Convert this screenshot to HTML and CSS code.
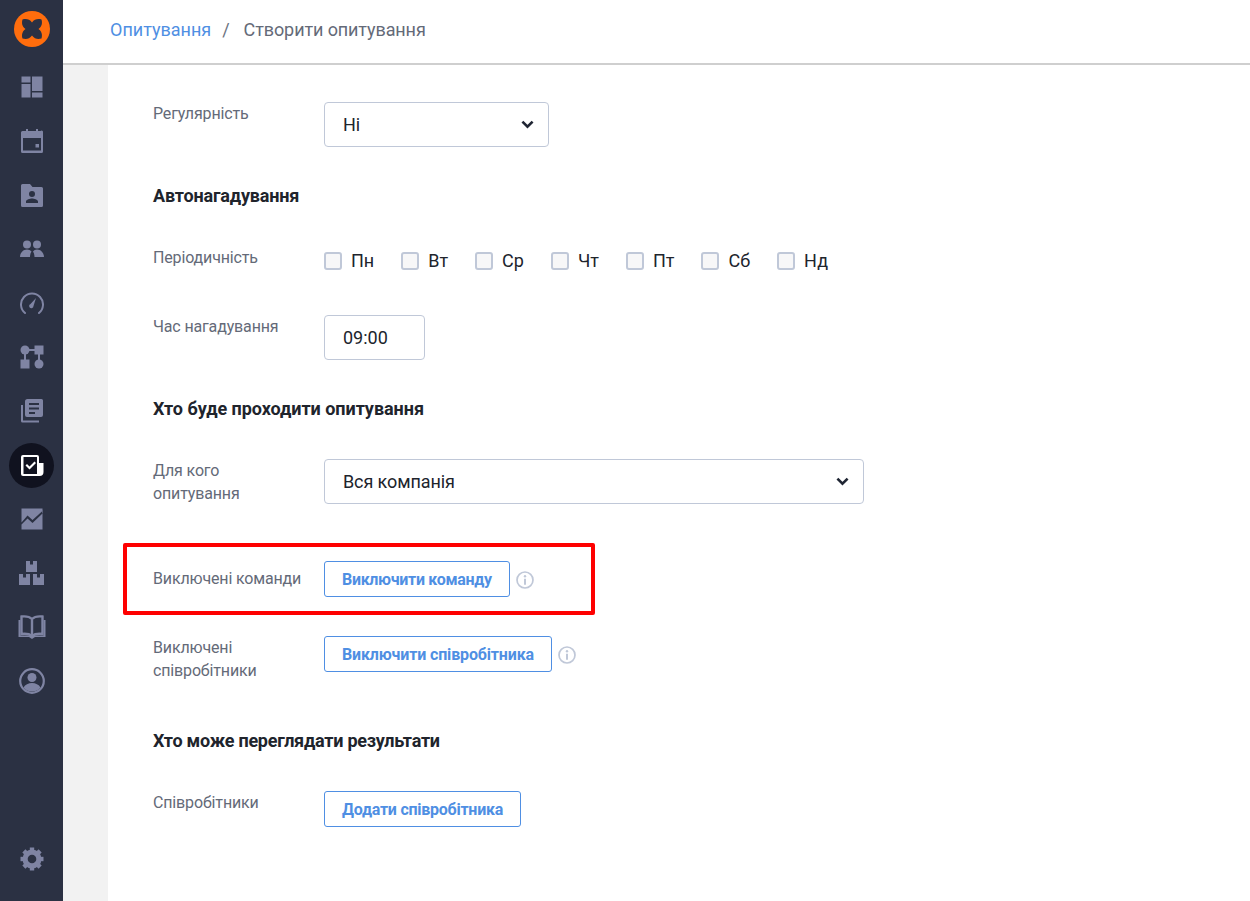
FILE: index.html
```html
<!DOCTYPE html>
<html lang="uk">
<head>
<meta charset="utf-8">
<title>Створити опитування</title>
<link rel="stylesheet" href="styles.css">
</head>
<body>
<div class="app">
  <aside class="sidebar">
    <div class="logo">
      <svg viewBox="0 0 36 36" width="36" height="36"><circle cx="18" cy="18" r="18" fill="#ff6d0d"/><path d="M8.500 8.500C12 7.500 15.500 8 18 11.500C20.500 8 24 7.500 27.500 8.500C28.500 12 28 15.500 24.500 18C28 20.500 28.500 24 27.500 27.500C24 28.500 20.500 28 18 24.500C15.500 28 12 28.500 8.500 27.500C7.500 24 8 20.500 11.500 18C8 15.500 7.500 12 8.500 8.500Z" fill="#2b3143"/></svg>
    </div>
    <nav class="nav">
      <a class="nav-item"><svg viewBox="0 0 24 24" class="ico"><path d="M1.500 1.500h9v6h-9zM1.500 9h9v13.500h-9zM12 1.500h10.500V16H12zM12 17.500h10.500v5H12z"/></svg></a>
      <a class="nav-item"><svg viewBox="0 0 24 24" class="ico"><path d="M6 0h2v2h8V0h2v2h2.500A1.500 1.500 0 0 1 23 3.500v19a1.500 1.500 0 0 1-1.500 1.500h-19A1.500 1.500 0 0 1 1 22.500v-19A1.500 1.500 0 0 1 2.500 2H6zM3 9v12.500h18V9zM15.500 15h3.500v3.500h-3.500z" fill-rule="evenodd"/></svg></a>
      <a class="nav-item"><svg viewBox="0 0 24 24" class="ico"><path d="M2.500 1H10l2.500 3h9A1.500 1.500 0 0 1 23 5.500v17a1.500 1.500 0 0 1-1.500 1.500h-19A1.500 1.500 0 0 1 1 22.500v-20A1.500 1.500 0 0 1 2.500 1zM12 8a3 3 0 1 0 0 6 3 3 0 0 0 0-6zM6 20h12v-1.500c0-2-4-3-6-3s-6 1-6 3z" fill-rule="evenodd"/></svg></a>
      <a class="nav-item"><svg viewBox="0 0 24 24" class="ico"><circle cx="7" cy="7.500" r="4"/><circle cx="17" cy="7.500" r="4"/><path d="M0 20c0-4 3-7.500 7-7.500 1.800 0 3.500.8 4.500 2-1 1.500-1.500 3.500-1.500 5.500zM24 20c0-4-3-7.500-7-7.500-1.800 0-3 .8-4 2 1 1.500 1.500 3.500 1.500 5.500z"/></svg></a>
      <a class="nav-item"><svg viewBox="0 0 24 24" class="ico"><path d="M5 22A11 11 0 1 1 19 22" fill="none" stroke="#7f84a3" stroke-width="2" stroke-linecap="round"/><path d="M16 7l-2.500 8a2.200 2.200 0 1 1-3-2z"/></svg></a>
      <a class="nav-item"><svg viewBox="0 0 24 24" class="ico"><circle cx="5" cy="5" r="4.500"/><path d="M14.500.5h9v9h-9zM.5 14.500h9v9h-9z"/><circle cx="19" cy="19" r="4.500"/><path d="M8 4h8v2H8zM4 8h2v8H4zM18 8h2v8h-2z"/></svg></a>
      <a class="nav-item"><svg viewBox="0 0 24 24" class="ico"><path d="M7.500 0h14A1.500 1.500 0 0 1 23 1.500V16a2 2 0 0 1-2 2H7a2 2 0 0 1-2-2V2.500A2.500 2.500 0 0 1 7.500 0zM9 4v2h10V4zm0 4.500v2h10v-2zM9 13v2h6v-2z" fill-rule="evenodd"/><path d="M1 6h2v15.500h16v2H2.500A1.500 1.500 0 0 1 1 22z"/></svg></a>
      <a class="nav-item active"><svg viewBox="0 0 24 24" class="ico ico-active"><path d="M3 2h14a2 2 0 0 1 2 2v6h4.500v9a4 4 0 0 1-4 4H3a2 2 0 0 1-2-2V4a2 2 0 0 1 2-2zM3.500 4v17H17V4z" fill-rule="evenodd"/><path d="M5.500 12.500l1.500-1.500 2.500 2.500 5-5 1.500 1.500-6.500 6.500z"/></svg></a>
      <a class="nav-item"><svg viewBox="0 0 24 24" class="ico"><path d="M1.500 1.500h21v21H1.500zM1.500 15.500v2l6-6 5 4.500 10.500-10v-2.500L12.500 13 7.500 8.500z" fill-rule="evenodd"/></svg></a>
      <a class="nav-item"><svg viewBox="0 0 25 24" class="ico ico-boxes"><path d="M7 0h4v3.500h3V0h4v11H7zM0 13h4v3.500h3V13h4v11H0zM14 13h4v3.500h3V13h4v11H14z"/></svg></a>
      <a class="nav-item"><svg viewBox="0 0 28 24" class="ico ico-wide"><path d="M14 4v16M14 4c-2-2-6-3-10.500-2.500V19c4-.5 8 0 10.500 2 2.500-2 6.500-2.500 10.500-2V1.500C20 1 16 2 14 4z" fill="none" stroke="#7f84a3" stroke-width="2.400"/><path d="M.5 5h2v15.500h23V5h2v17H17l-3 2-3-2H.5z"/></svg></a>
      <a class="nav-item"><svg viewBox="0 0 26 26" class="ico ico-user"><circle cx="13" cy="13" r="11.800" fill="none" stroke="#7f84a3" stroke-width="2.200"/><circle cx="13" cy="9.500" r="4.500"/><path d="M4.500 19.500c1.500-3 5-4.500 8.500-4.500s7 1.500 8.500 4.500c-2 2.500-5 4-8.500 4s-6.500-1.500-8.500-4z"/></svg></a>
    </nav>
    <a class="nav-item gear"><svg viewBox="0 0 24 24" class="ico"><circle cx="12" cy="12" r="9.500"/><g><rect x="9.800" y="0.500" width="4.400" height="23"/><rect x="9.800" y="0.500" width="4.400" height="23" transform="rotate(45 12 12)"/><rect x="9.800" y="0.500" width="4.400" height="23" transform="rotate(90 12 12)"/><rect x="9.800" y="0.500" width="4.400" height="23" transform="rotate(135 12 12)"/></g><circle cx="12" cy="12" r="4.300" fill="#2b3143"/></svg></a>
  </aside>
  <div class="page">
    <header class="topbar">
      <a class="crumb-link">Опитування</a>
      <span class="crumb-sep">/</span>
      <span class="crumb">Створити опитування</span>
    </header>
    <div class="body">
      <div class="strip"></div>
      <main class="form">
        <div class="row row-regular">
          <label class="label">Регулярність</label>
          <div class="select select-small"><span>Ні</span><svg class="chev" viewBox="0 0 12 8"><path d="M1.300 1.300L6 6l4.700-4.700" fill="none" stroke="#1f2533" stroke-width="2.400"/></svg></div>
        </div>
        <h2 class="heading h-auto">Автонагадування</h2>
        <div class="row row-days">
          <label class="label">Періодичність</label>
          <div class="days">
            <span class="day"><i class="box"></i>Пн</span>
            <span class="day"><i class="box"></i>Вт</span>
            <span class="day"><i class="box"></i>Ср</span>
            <span class="day"><i class="box"></i>Чт</span>
            <span class="day"><i class="box"></i>Пт</span>
            <span class="day"><i class="box"></i>Сб</span>
            <span class="day"><i class="box"></i>Нд</span>
          </div>
        </div>
        <div class="row row-time">
          <label class="label">Час нагадування</label>
          <div class="input-time">09:00</div>
        </div>
        <h2 class="heading h-who">Хто буде проходити опитування</h2>
        <div class="row row-for">
          <label class="label label-narrow">Для кого опитування</label>
          <div class="select select-wide"><span>Вся компанія</span><svg class="chev" viewBox="0 0 12 8"><path d="M1.300 1.300L6 6l4.700-4.700" fill="none" stroke="#1f2533" stroke-width="2.400"/></svg></div>
        </div>
        <div class="row row-teams">
          <label class="label">Виключені команди</label>
          <button class="btn btn-team">Виключити команду</button>
          <svg class="info" viewBox="0 0 18 18"><circle cx="9" cy="9" r="8" fill="none" stroke="#c0c8d8" stroke-width="1.700"/><circle cx="9" cy="5.300" r="1.200" fill="#c0c8d8"/><path d="M8 7.800h2v6H8z" fill="#c0c8d8"/></svg>
        </div>
        <div class="row row-emp">
          <label class="label label-narrow">Виключені співробітники</label>
          <button class="btn btn-emp">Виключити співробітника</button>
          <svg class="info" viewBox="0 0 18 18"><circle cx="9" cy="9" r="8" fill="none" stroke="#c0c8d8" stroke-width="1.700"/><circle cx="9" cy="5.300" r="1.200" fill="#c0c8d8"/><path d="M8 7.800h2v6H8z" fill="#c0c8d8"/></svg>
        </div>
        <h2 class="heading h-view">Хто може переглядати результати</h2>
        <div class="row row-add">
          <label class="label">Співробітники</label>
          <button class="btn btn-add">Додати співробітника</button>
        </div>
        <div class="highlight"></div>
      </main>
    </div>
  </div>
</div>
</body>
</html>
```
FILE: styles.css
```css
* { box-sizing: border-box; }
html, body { margin: 0; padding: 0; height: 901px; overflow: hidden; background: #fff; }
body { font-family: "Roboto", "Noto Sans", sans-serif; color: #20242c; }
.app { display: flex; height: 901px; }

.sidebar { width: 63px; flex: none; background: #2b3143; display: flex; flex-direction: column; align-items: center; padding: 11px 0 15px; }
.logo { height: 36px; margin-bottom: 13px; }
.logo svg { display: block; }
.nav { display: flex; flex-direction: column; align-items: center; }
.nav-item { width: 45px; height: 54px; display: flex; align-items: center; justify-content: center; position: relative; }
.ico { width: 24px; height: 24px; fill: #7f84a3; display: block; position: relative; }
.ico-boxes { width: 25px; height: 24px; }
.ico-wide { width: 28px; height: 24px; }
.ico-user { width: 26px; height: 26px; }
.active::before { content: ""; position: absolute; left: 0; top: 4.500px; width: 45px; height: 45px; border-radius: 50%; background: #10121f; }
.ico-active { fill: #fff; }
.gear { margin-top: auto; }

.page { flex: 1; display: flex; flex-direction: column; min-width: 0; }
.topbar { height: 65px; flex: none; border-bottom: 2px solid #cfcfcf; display: flex; align-items: center; padding: 0 0 4px 47px; font-size: 18px; background: #fff; }
.crumb-link { color: #4f8fe3; }
.crumb-sep { color: #6c7280; margin: 0 14px 0 11px; }
.crumb { color: #646a78; letter-spacing: -0.1px; }

.body { flex: 1; display: flex; min-height: 0; }
.strip { width: 45px; flex: none; background: #f2f2f2; }
.form { flex: 1; position: relative; padding: 37px 0 0 45px; }

.row { display: flex; align-items: flex-start; }
.label { width: 171px; flex: none; font-size: 16px; line-height: 23px; color: #646a78; letter-spacing: -0.15px; }
.heading { margin: 0; font-size: 18px; line-height: 24px; font-weight: 700; color: #20242c; letter-spacing: -0.18px; }

.select { height: 45px; border: 1px solid #c0c8d8; border-radius: 4px; display: flex; align-items: center; justify-content: space-between; padding: 0 14px 0 18px; font-size: 18px; color: #20242c; background: #fff; letter-spacing: -0.1px; }
.select-small { width: 225px; }
.select-wide { width: 540px; }
.chev { width: 13px; height: 9px; }

.h-auto { margin-top: 37px; }
.row-days { margin-top: 38px; height: 30px; }
.days { display: flex; }
.day { display: flex; align-items: center; font-size: 18px; line-height: 24px; height: 24px; margin-right: 27px; margin-top: 3px; color: #20242c; }
.box { width: 18px; height: 18px; margin: 0 9px 0 0; border: 2px solid #c0c8d8; border-radius: 3px; background: #f7f7f8; }
.row-time { margin-top: 39px; }
.input-time { width: 101px; height: 45px; border: 1px solid #c0c8d8; border-radius: 4px; display: flex; align-items: center; padding-left: 18px; font-size: 18px; }
.h-who { margin-top: 37px; letter-spacing: -0.04px; }
.row-for { margin-top: 38px; }
.label-narrow { padding-right: 40px; }
.row-teams { margin-top: 56px; align-items: center; }
.row-teams .label { margin-top: -2px; }
.row-teams .info { margin-top: 1px; }
.row-emp { margin-top: 39px; }
.row-add { margin-top: 38px; }
.h-view { margin-top: 47px; letter-spacing: -0.25px; }

.btn { height: 36px; padding: 0 17px; border: 1px solid #4f8fe3; border-radius: 3px; background: #fff; color: #4f8fe3; font-family: inherit; font-size: 16px; font-weight: 700; }
.btn-team { letter-spacing: -0.31px; }
.btn-emp { letter-spacing: -0.15px; }
.btn-add { letter-spacing: -0.25px; }
.info { width: 18px; height: 18px; margin: 0 0 0 6px; flex: none; }
.row-emp .info { margin-top: 10px; }

.highlight { position: absolute; left: 15px; top: 478px; width: 472px; height: 72px; border: 4px solid #fe0000; border-radius: 2px; pointer-events: none; }
```
